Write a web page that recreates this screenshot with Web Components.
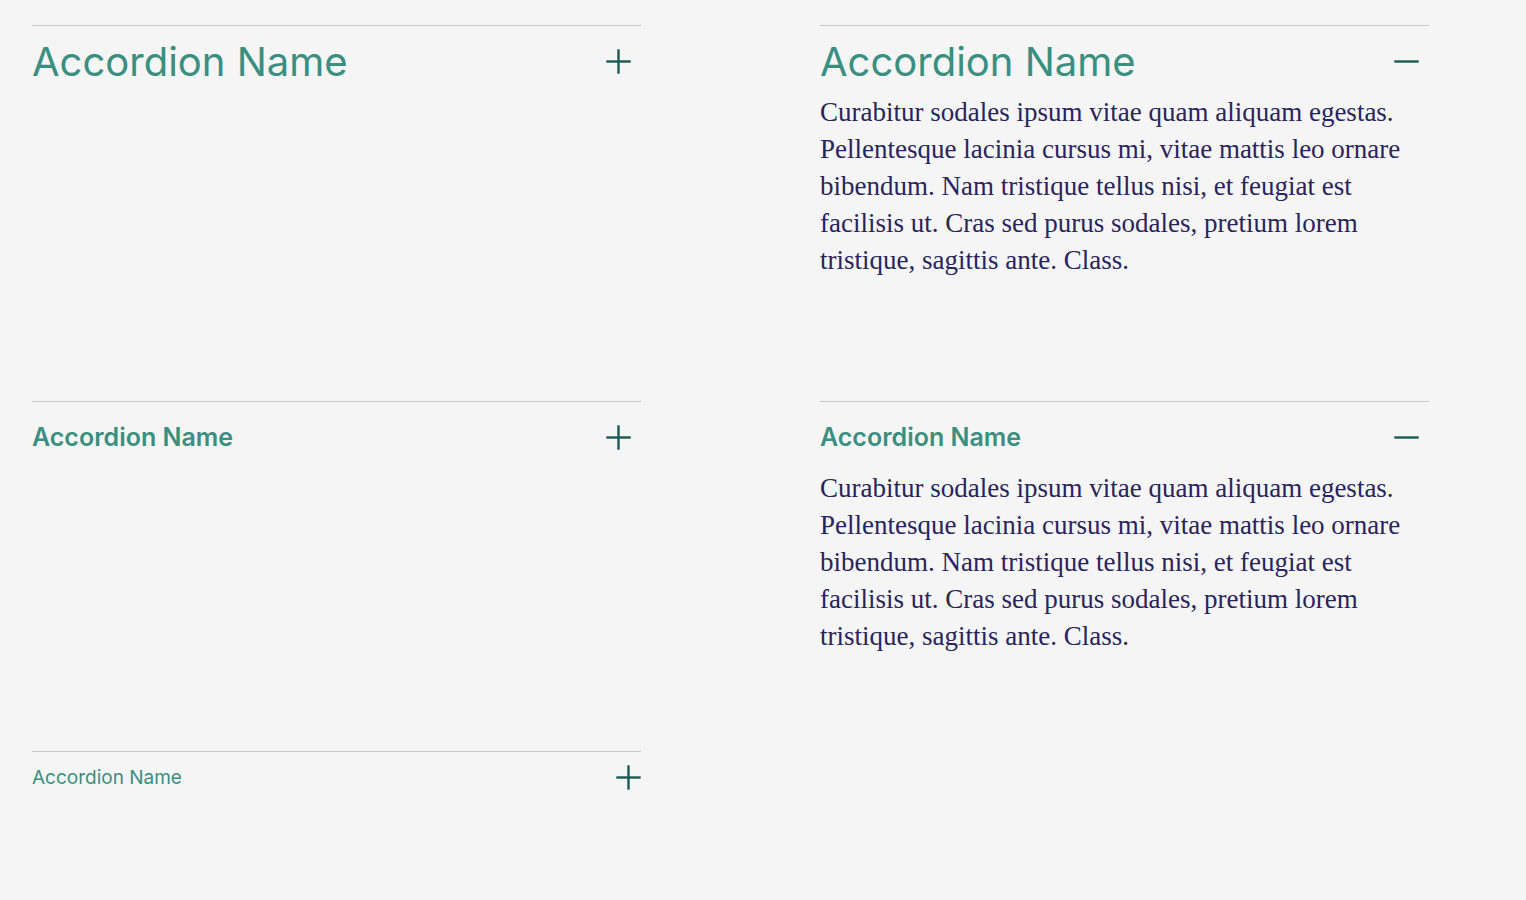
<!DOCTYPE html>
<html lang="en">
<head>
<meta charset="utf-8">
<meta name="viewport" content="width=device-width, initial-scale=1">
<title>Accordion</title>
<style>
  body { margin: 0; background: #f5f5f5; }
</style>
</head>
<body>
<accordion-gallery>
  <accordion-item size="large" heading="Accordion Name">Curabitur sodales ipsum vitae quam aliquam egestas. Pellentesque lacinia cursus mi, vitae mattis leo ornare bibendum. Nam tristique tellus nisi, et feugiat est facilisis ut. Cras sed purus sodales, pretium lorem tristique, sagittis ante. Class.</accordion-item>
  <accordion-item size="large" heading="Accordion Name" open>Curabitur sodales ipsum vitae quam aliquam egestas. Pellentesque lacinia cursus mi, vitae mattis leo ornare bibendum. Nam tristique tellus nisi, et feugiat est facilisis ut. Cras sed purus sodales, pretium lorem tristique, sagittis ante. Class.</accordion-item>
  <accordion-item size="medium" heading="Accordion Name">Curabitur sodales ipsum vitae quam aliquam egestas. Pellentesque lacinia cursus mi, vitae mattis leo ornare bibendum. Nam tristique tellus nisi, et feugiat est facilisis ut. Cras sed purus sodales, pretium lorem tristique, sagittis ante. Class.</accordion-item>
  <accordion-item size="medium" heading="Accordion Name" open>Curabitur sodales ipsum vitae quam aliquam egestas. Pellentesque lacinia cursus mi, vitae mattis leo ornare bibendum. Nam tristique tellus nisi, et feugiat est facilisis ut. Cras sed purus sodales, pretium lorem tristique, sagittis ante. Class.</accordion-item>
  <accordion-item size="small" heading="Accordion Name">Curabitur sodales ipsum vitae quam aliquam egestas.</accordion-item>
</accordion-gallery>

<template id="gallery-template">
  <style>
    :host {
      display: grid;
      grid-template-columns: repeat(2, minmax(0, 1fr));
      align-items: start;
      gap: 96px 179px;
      padding: 25px 97px 96px 32px;
    }
  </style>
  <slot></slot>
</template>

<template id="toggle-icon-template">
  <style>
    :host { display: block; flex: none; width: 25px; height: 25px; color: #1b5a53; }
    svg { display: block; }
    :host([expanded]) .upright { display: none; }
  </style>
  <svg width="25" height="25" viewBox="0 0 25 25" fill="none" stroke="currentColor" stroke-width="2.4" aria-hidden="true">
    <path d="M0.3 12.5H24.7"/>
    <path class="upright" d="M12.5 0.3V24.7"/>
  </svg>
</template>

<template id="item-template">
  <style>
    :host { display: block; border-top: 1px solid #c8cbca; }
    :host([size="large"]) { padding-bottom: 26px; }
    h3 { margin: 0; font: inherit; }
    button {
      display: flex;
      align-items: center;
      justify-content: space-between;
      gap: 24px;
      width: 100%;
      margin: 0;
      padding: 12px 10px 9px 0;
      border: 0;
      background: none;
      color: #3a8f80;
      font: 400 40px/47px Inter, sans-serif;
      text-align: left;
      cursor: pointer;
    }
    :host([size="medium"]) button { padding: 23px 10px 20px 0; font-size: 25px; font-weight: 600; line-height: 25px; }
    :host([size="small"]) button { padding: 13px 0; font-size: 19px; line-height: 25px; }
    .panel { color: #29245c; font: 27px/37px "Liberation Serif", serif; }
  </style>
  <h3><button type="button" id="header" aria-controls="panel"><span></span><toggle-icon></toggle-icon></button></h3>
  <div class="panel" id="panel" role="region" aria-labelledby="header"><slot></slot></div>
</template>

<script>
  const stamp = (host, id) => {
    const root = host.attachShadow({ mode: "open" });
    root.append(document.getElementById(id).content.cloneNode(true));
    return root;
  };

  class AccordionGallery extends HTMLElement {
    constructor() { super(); stamp(this, "gallery-template"); }
  }

  class ToggleIcon extends HTMLElement {
    constructor() { super(); stamp(this, "toggle-icon-template"); }
  }

  class AccordionItem extends HTMLElement {
    static observedAttributes = ["open", "heading"];
    constructor() {
      super();
      stamp(this, "item-template");
      this.shadowRoot.querySelector("button").addEventListener("click", () => this.toggleAttribute("open"));
    }
    connectedCallback() { this.update(); }
    attributeChangedCallback() { this.update(); }
    update() {
      const root = this.shadowRoot;
      const open = this.hasAttribute("open");
      root.querySelector("span").textContent = this.getAttribute("heading");
      root.querySelector("button").setAttribute("aria-expanded", open);
      root.querySelector("toggle-icon").toggleAttribute("expanded", open);
      root.querySelector(".panel").hidden = !open;
    }
  }

  customElements.define("toggle-icon", ToggleIcon);
  customElements.define("accordion-item", AccordionItem);
  customElements.define("accordion-gallery", AccordionGallery);
</script>
</body>
</html>
